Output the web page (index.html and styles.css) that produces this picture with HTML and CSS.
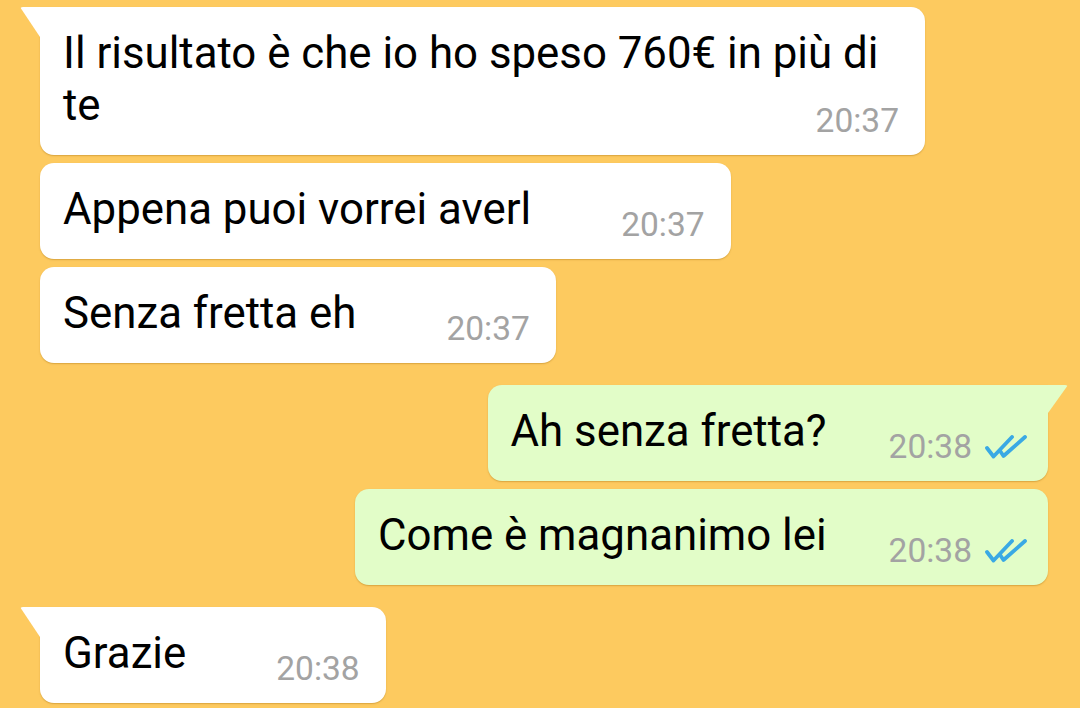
FILE: index.html
```html
<!DOCTYPE html>
<html lang="it">
<head>
	<meta charset="UTF-8">
	<title>Chat</title>
	<link rel="stylesheet" href="styles.css">
</head>
<body>
	<div class="chat">
		<div class="msg in tail multi">
			<p class="text">Il risultato è che io ho speso 760€ in più di te</p>
			<span class="meta"><span class="time">20:37</span></span>
		</div>
		<div class="msg in">
			<p class="text">Appena puoi vorrei averl</p>
			<span class="meta"><span class="time">20:37</span></span>
		</div>
		<div class="msg in">
			<p class="text">Senza fretta eh</p>
			<span class="meta"><span class="time">20:37</span></span>
		</div>

		<div class="msg out tail">
			<p class="text">Ah senza fretta?</p>
			<span class="meta">
				<span class="time">20:38</span>
				<svg class="ticks" viewBox="0 0 42 24" width="42" height="24">
					<path d="M2 13 L8.5 21.5 L27 2" />
					<path d="M15.5 16.5 L18.5 21 L40 2" />
				</svg>
			</span>
		</div>
		<div class="msg out">
			<p class="text">Come è magnanimo lei</p>
			<span class="meta">
				<span class="time">20:38</span>
				<svg class="ticks" viewBox="0 0 42 24" width="42" height="24">
					<path d="M2 13 L8.5 21.5 L27 2" />
					<path d="M15.5 16.5 L18.5 21 L40 2" />
				</svg>
			</span>
		</div>

		<div class="msg in tail">
			<p class="text">Grazie</p>
			<span class="meta"><span class="time">20:38</span></span>
		</div>
	</div>
</body>
</html>
```

FILE: styles.css
```css
html,
body {
    margin: 0;
    padding: 0;
}

body {
    background: #fdca5f;
    font-family: Roboto, "Noto Sans", "Liberation Sans", sans-serif;
    height: 708px;
    overflow: hidden;
}

.chat {
    display: flex;
    flex-direction: column;
    padding-top: 7px;
}

.msg {
    position: relative;
    display: flex;
    align-items: flex-end;
    padding: 20px 26px 24px 23px;
    border-radius: 14px;
    box-shadow: 0 1px 1.5px rgba(150, 95, 0, .35);
    margin-top: 8px;
}

.msg.tail {
    margin-top: 22px;
}

.chat > .msg:first-child {
    margin-top: 0;
}

.in {
    align-self: flex-start;
    margin-left: 40px;
    background: #fff;
}

.out {
    align-self: flex-end;
    margin-right: 32px;
    padding-right: 21px;
    background: #e2fdc8;
}

.in.tail {
    border-top-left-radius: 0;
}

.out.tail {
    border-top-right-radius: 0;
}

/* the little corner of the first bubble in a group */
.tail::before {
    content: '';
    position: absolute;
    top: 0;
    width: 20px;
    height: 30px;
    background: inherit;
}

.in.tail::before {
    left: -20px;
    border-top-left-radius: 3px;
    clip-path: polygon(0 0, 100% 0, 100% 100%);
}

.out.tail::before {
    right: -20px;
    height: 28px;
    border-top-right-radius: 3px;
    clip-path: polygon(0 0, 100% 0, 0 100%);
}

.text {
    margin: 0;
    font-size: 43.8px;
    line-height: 52px;
    color: #000;
}

.meta {
    display: flex;
    align-items: center;
    margin-left: 90px;
    margin-bottom: -6px;
    font-size: 33.5px;
    line-height: 32px;
    color: #a3a3a3;
    white-space: nowrap;
}

.out .meta {
    margin-left: 62px;
}

.ticks {
    margin-left: 13px;
    fill: none;
    stroke: #3aa9e4;
    stroke-width: 3.8;
    stroke-linecap: round;
    stroke-linejoin: round;
}

/* long message: time sits under the last line */
.multi {
    display: grid;
    width: 885px;
    box-sizing: border-box;
}

.multi .text,
.multi .meta {
    grid-area: 1 / 1;
}

.multi .meta {
    justify-self: end;
    align-self: end;
    margin-left: 0;
}
```
